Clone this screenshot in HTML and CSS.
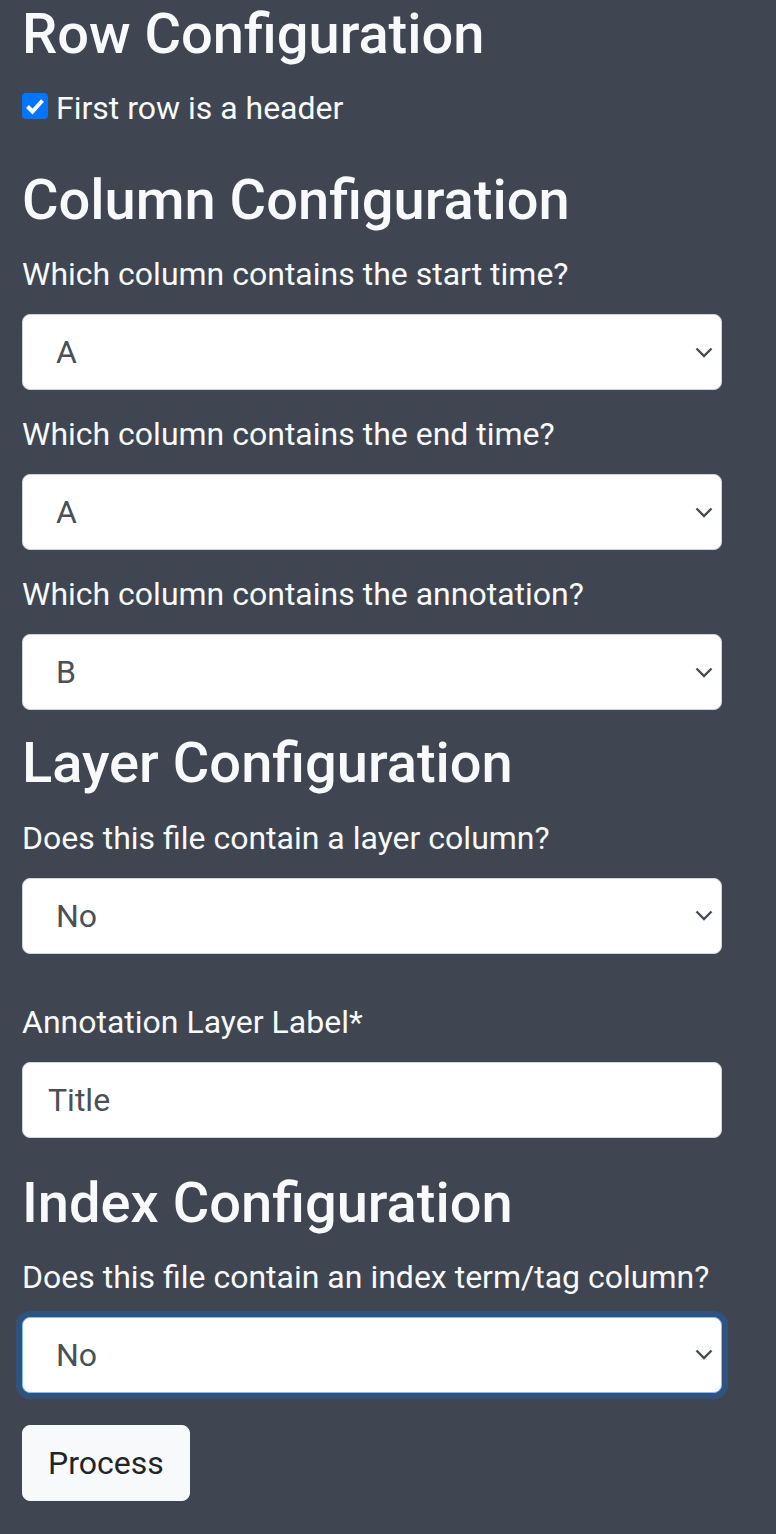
FILE: index.html
```html
<!DOCTYPE html>
<html lang="en">
<head>
<meta charset="utf-8">
<title>Configuration</title>
<link rel="stylesheet" href="styles.css">
</head>
<body>
<form class="page">
  <h3 class="heading">Row Configuration</h3>
  <div class="check-row">
    <label class="check-label"><input type="checkbox" class="check" checked> First row is a header</label>
  </div>

  <h3 class="heading">Column Configuration</h3>
  <label class="form-label">Which column contains the start time?</label>
  <select class="select"><option>A</option><option>B</option></select>
  <label class="form-label">Which column contains the end time?</label>
  <select class="select"><option>A</option><option>B</option></select>
  <label class="form-label">Which column contains the annotation?</label>
  <select class="select"><option>A</option><option selected>B</option></select>

  <h3 class="heading">Layer Configuration</h3>
  <label class="form-label">Does this file contain a layer column?</label>
  <select class="select select-spaced"><option>No</option><option>Yes</option></select>

  <label class="form-label">Annotation Layer Label*</label>
  <input class="text-input" type="text" value="Title">

  <h3 class="heading">Index Configuration</h3>
  <label class="form-label">Does this file contain an index term/tag column?</label>
  <select class="select select-focus"><option>No</option><option>Yes</option></select>

  <button type="button" class="btn">Process</button>
</form>
</body>
</html>
```

FILE: styles.css
```css
html, body {
  margin: 0;
  padding: 0;
  background: #3f4651;
}

body {
  font-family: Roboto, "Liberation Sans", sans-serif;
  font-size: 32px;
  line-height: 1.5;
  color: #f8f9fa;
}

.page {
  display: flex;
  flex-direction: column;
  align-items: flex-start;
  width: 700px;
  padding: 1px 0 33px 22px;
}

.heading {
  margin: 0 0 16px;
  font-size: 56px;
  font-weight: 500;
  line-height: 1.2;
  color: #f8f9fa;
}

.check-row {
  margin-bottom: 35px;
  height: 48px;
}

.check-label {
  display: block;
  color: #f8f9fa;
}

.check {
  appearance: none;
  -webkit-appearance: none;
  display: inline-block;
  width: 26px;
  height: 26px;
  margin: 0;
  vertical-align: baseline;
  border-radius: 4px;
  background: #0075ff url("data:image/svg+xml,%3Csvg xmlns='http://www.w3.org/2000/svg' viewBox='0 0 26 26'%3E%3Cpath d='M5.5 13.5l5 5 10-11' fill='none' stroke='%23fff' stroke-width='4'/%3E%3C/svg%3E") center / 26px 26px no-repeat;
}

.form-label {
  display: block;
  margin-bottom: 16px;
  color: #f8f9fa;
}

.select,
.text-input {
  appearance: none;
  -webkit-appearance: none;
  box-sizing: border-box;
  width: 700px;
  height: 76px;
  margin: 0 0 20px;
  border: 1px solid #ced4da;
  border-radius: 8px;
  background-color: #fff;
  font-family: Roboto, "Liberation Sans", sans-serif;
  font-size: 32px;
  line-height: 1.5;
  color: #495057;
  outline: none;
}

.select {
  padding: 0 48px 0 33px;
  background-image: url("data:image/svg+xml,%3Csvg xmlns='http://www.w3.org/2000/svg' viewBox='0 0 18 11'%3E%3Cpath d='M1.5 1.5l7.5 7.5 7.5-7.5' fill='none' stroke='%23454b53' stroke-width='2.4'/%3E%3C/svg%3E");
  background-repeat: no-repeat;
  background-position: right 8px center;
  background-size: 18px 11px;
}

.select-spaced {
  margin-bottom: 44px;
}

.text-input {
  padding: 0 24px 0 25px;
  margin-bottom: 32px;
}

.select-focus {
  border-color: #80bdff;
  box-shadow: 0 0 0 6px rgba(0, 123, 255, 0.25);
  margin-bottom: 32px;
}

.btn {
  box-sizing: border-box;
  height: 76px;
  padding: 0 25px;
  border: 1px solid #f8f9fa;
  border-radius: 8px;
  background: #f8f9fa;
  font-family: Roboto, "Liberation Sans", sans-serif;
  font-size: 32px;
  line-height: 1.5;
  color: #212529;
}
```
